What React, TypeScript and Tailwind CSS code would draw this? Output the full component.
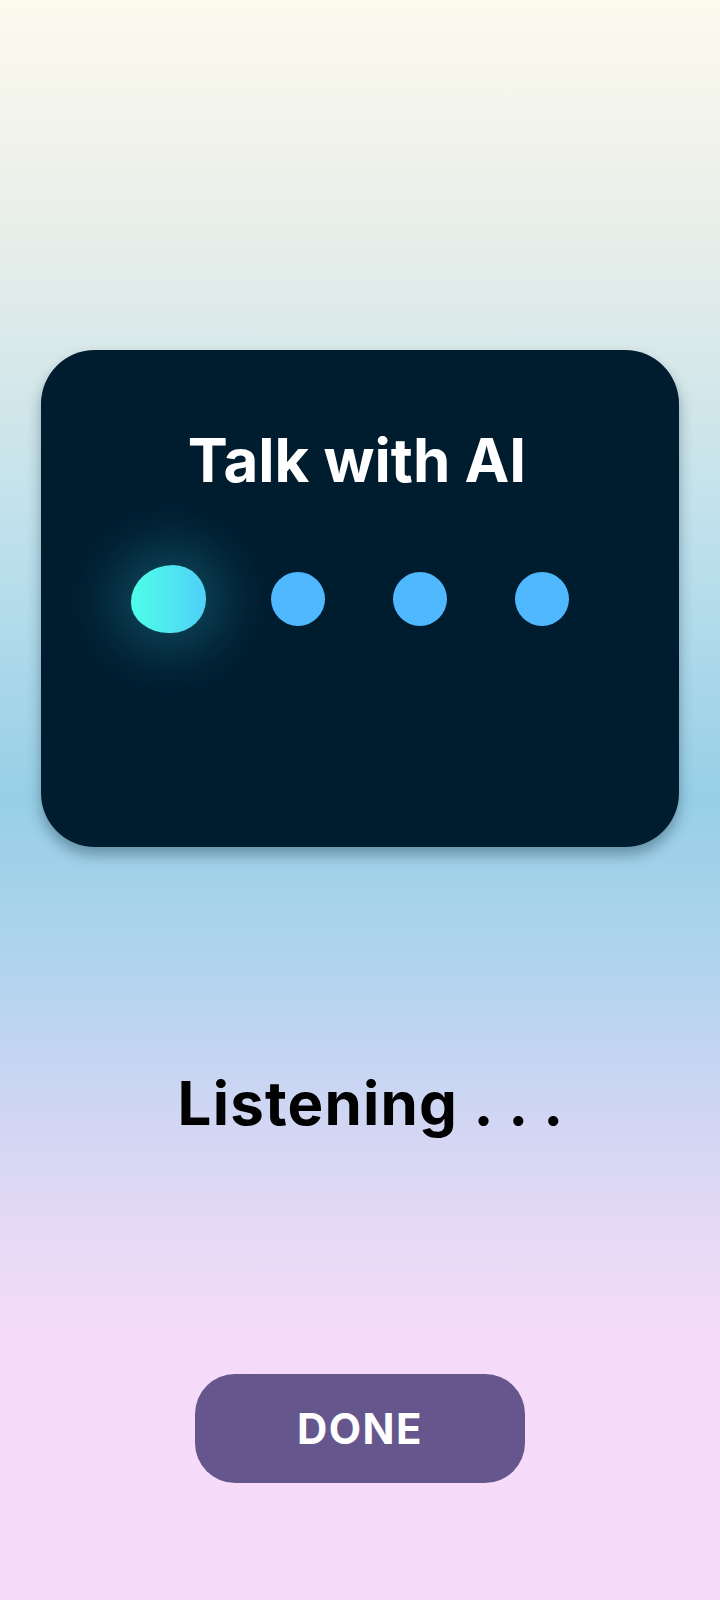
export default function App() {
  return (
    <div
      className="min-h-[1600px] w-full flex flex-col items-center pt-[350px] bg-[linear-gradient(180deg,#fdfaee_0%,#ecf0ea_12%,#d9e9ea_22%,#bde0ec_34%,#97cfe7_50%,#b0d4ee_60%,#d1d6f3_70%,#e8daf6_78%,#f5dbf9_84%,#f7dcf9_100%)]"
      style={{ fontFamily: "Inter, 'Noto Sans', sans-serif" }}
    >
      {/* card */}
      <div className="w-[638px] h-[497px] rounded-[54px] bg-[#001d30] shadow-[0_8px_14px_rgba(0,30,50,0.35)] flex flex-col pt-[80px]">
        <h1 className="text-center text-white font-bold text-[60px] leading-none pr-[6px]">
          Talk with AI
        </h1>

        <div className="flex items-center mt-[75px] pl-[90px]">
          {/* active blob */}
          <div className="w-[75px] h-[68px] mr-[64px] bg-[linear-gradient(90deg,#4efde9_0%,#4ee8ef_50%,#50cff8_100%)] rounded-[58%_45%_48%_52%/56%_50%_50%_46%] shadow-[0_0_50px_22px_rgba(45,170,185,0.28)]" />
          <div className="flex gap-[68px] pl-[1px]">
            <div className="w-[54px] h-[54px] rounded-full bg-[#4fb8fe]" />
            <div className="w-[54px] h-[54px] rounded-full bg-[#4fb8fe]" />
            <div className="w-[54px] h-[54px] rounded-full bg-[#4fb8fe]" />
          </div>
        </div>
      </div>

      <p className="mt-[226px] text-[60px] leading-none font-bold text-black tracking-[1.2px] pl-[22px]">
        Listening . . .
      </p>

      <button className="mt-[241px] w-[330px] h-[109px] rounded-[40px] bg-[#65568e] text-white font-bold text-[42px] leading-none tracking-[1.5px]">
        DONE
      </button>
    </div>
  );
}
